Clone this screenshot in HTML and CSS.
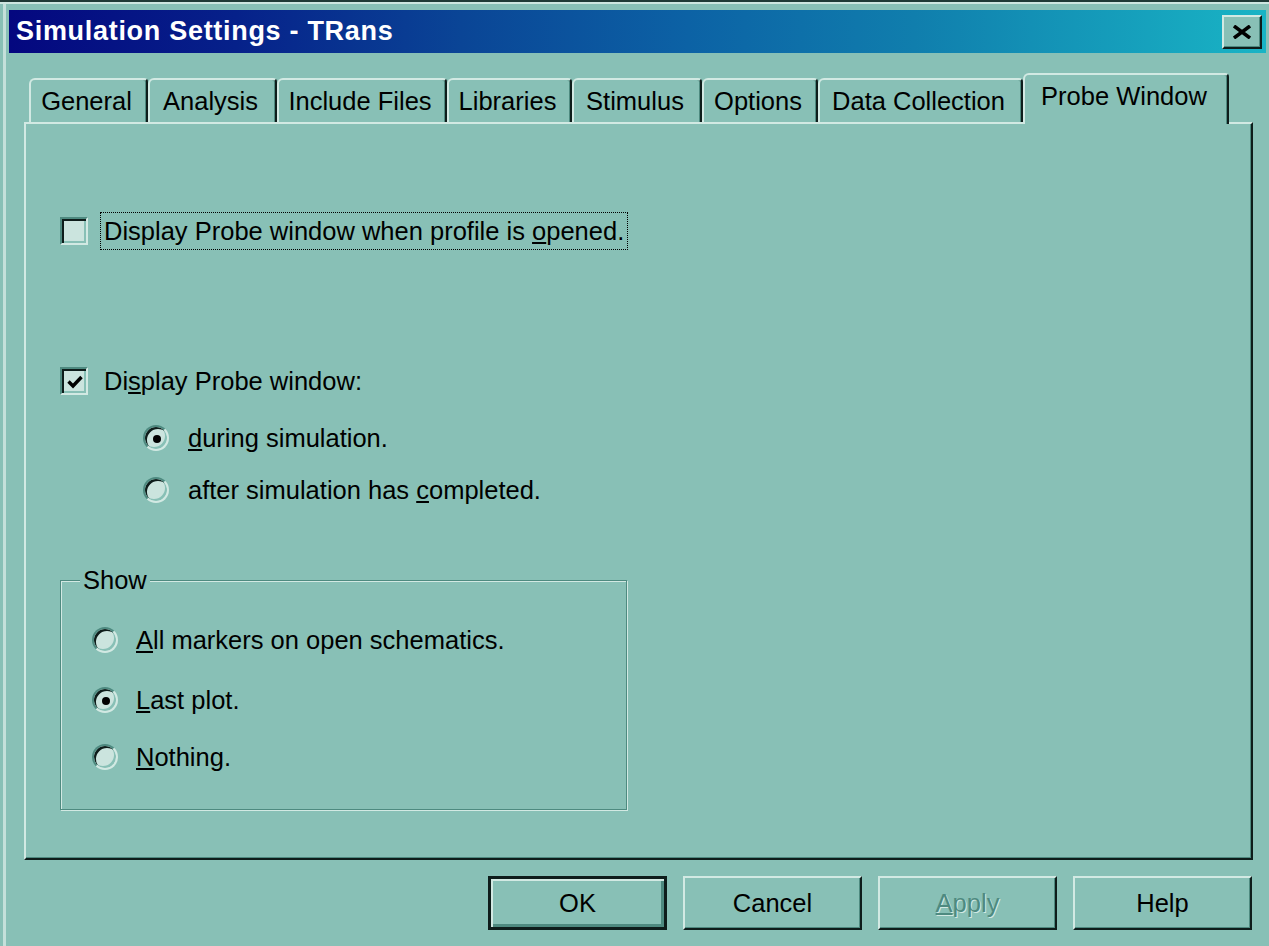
FILE: index.html
```html
<!DOCTYPE html>
<html lang="en">
<head>
<meta charset="utf-8">
<title>Simulation Settings - TRans</title>
<link rel="stylesheet" href="styles.css">
</head>
<body>
<div class="window">
  <div class="titlebar">
    <span class="title">Simulation Settings - TRans</span>
    <button class="close" type="button" aria-label="Close">
      <svg width="18" height="14" viewBox="0 0 18 14"><path d="M1 1 L17 13 M17 1 L1 13" stroke="#000" stroke-width="3.6" fill="none"/></svg>
    </button>
  </div>

  <div class="client">
    <div class="tabs">
      <div class="tab tab-general">General</div>
      <div class="tab tab-analysis">Analysis</div>
      <div class="tab tab-include">Include Files</div>
      <div class="tab tab-libraries">Libraries</div>
      <div class="tab tab-stimulus">Stimulus</div>
      <div class="tab tab-options">Options</div>
      <div class="tab tab-data">Data Collection</div>
      <div class="tab tab-probe active">Probe Window</div>
    </div>

    <div class="panel">
      <div class="option first">
        <span class="checkbox"></span>
        <span class="label focus">Display Probe window when profile is <u>o</u>pened.</span>
      </div>

      <div class="option second">
        <span class="checkbox checked">
          <svg width="16" height="14" viewBox="0 0 16 14"><path d="M1.5 6.5 L6 11 L14.5 2" stroke="#000" stroke-width="3.4" fill="none"/></svg>
        </span>
        <span class="label">Di<u>s</u>play Probe window:</span>
      </div>

      <div class="option sub sub-first">
        <span class="radio checked"></span>
        <span class="label"><u>d</u>uring simulation.</span>
      </div>
      <div class="option sub sub-second">
        <span class="radio"></span>
        <span class="label">after simulation has <u>c</u>ompleted.</span>
      </div>

      <div class="group">
        <span class="legend">Show</span>
        <div class="option grp grp-1">
          <span class="radio"></span>
          <span class="label"><u>A</u>ll markers on open schematics.</span>
        </div>
        <div class="option grp grp-2">
          <span class="radio checked"></span>
          <span class="label"><u>L</u>ast plot.</span>
        </div>
        <div class="option grp grp-3">
          <span class="radio"></span>
          <span class="label"><u>N</u>othing.</span>
        </div>
      </div>
    </div>

    <div class="buttons">
      <button class="btn default" type="button">OK</button>
      <button class="btn" type="button">Cancel</button>
      <button class="btn disabled" type="button"><u>A</u>pply</button>
      <button class="btn" type="button">Help</button>
    </div>
  </div>
</div>
</body>
</html>
```

FILE: styles.css
```css
* {
  box-sizing: border-box;
}

html, body {
  margin: 0;
  padding: 0;
  background: #88c0b6;
  overflow: hidden;
}

body {
  width: 1269px;
  height: 946px;
  font-family: "Liberation Sans", Arial, sans-serif;
  font-size: 25.5px;
  color: #000;
}

/* dialog frame */
.window {
  width: 1269px;
  height: 946px;
  border-top: 2px solid #1f3a36;
  padding: 8px 3px 0 9px;
  box-shadow: inset 0 2px 0 #cde6e0, inset 3px 0 0 #88c0b6, inset 6px 0 0 #c4e0da;
}

.titlebar {
  height: 43px;
  display: flex;
  align-items: center;
  justify-content: space-between;
  padding-left: 7px;
  background: linear-gradient(to right, #04077f 0%, #06218a 18%, #0a4596 36%, #0c62a5 54%, #107ead 72%, #19b4c5 100%);
}

.title {
  color: #fff;
  font-weight: bold;
  font-size: 27px;
  letter-spacing: 0.7px;
}

.close {
  width: 40px;
  height: 34px;
  margin-right: 4px;
  padding: 0;
  display: flex;
  align-items: center;
  justify-content: center;
  background: #88c0b6;
  border: 2px solid;
  border-color: #d2e9e3 #0e1d1b #0e1d1b #d2e9e3;
  box-shadow: inset -1px -1px 0 #4e8a80;
}

/* tab strip + page */
.client {
  padding: 20px 13px 0 15px;
}

.tabs {
  display: flex;
  align-items: flex-end;
  height: 51px;
  margin-left: 5px;
  margin-bottom: -2px;
  position: relative;
  z-index: 1;
}

.tab {
  height: 44px;
  margin-bottom: 2px;
  display: flex;
  align-items: center;
  justify-content: center;
  padding-right: 4px;
  background: #88c0b6;
  border-top: 2px solid #d2e9e3;
  border-left: 2px solid #d2e9e3;
  border-right: 2px solid #0e1d1b;
  border-radius: 6px 4px 0 0;
  box-shadow: inset -1px 0 0 #4e8a80;
  white-space: nowrap;
}

.tab-general { width: 119px; }
.tab-analysis { width: 129px; }
.tab-include { width: 170px; }
.tab-libraries { width: 125px; }
.tab-stimulus { width: 130px; }
.tab-options { width: 116px; }
.tab-data { width: 205px; }
.tab-probe { width: 206px; }

.tab.active {
  height: 51px;
  margin-bottom: 0;
  padding-bottom: 6px;
}

.panel {
  height: 738px;
  border: 2px solid;
  border-color: #d2e9e3 #0e1d1b #0e1d1b #d2e9e3;
  box-shadow: inset -1px -1px 0 #4e8a80;
  padding: 88px 0 0 34px;
}

/* check boxes and option buttons */
.option {
  display: flex;
  align-items: center;
  height: 38px;
}

.option.second { margin-top: 112px; }
.option.sub { margin-left: 83px; }
.option.sub-first { margin-top: 19px; }
.option.sub-second { margin-top: 14px; }

.label {
  line-height: 36px;
  padding: 0 3px;
  border: 1px solid transparent;
  white-space: nowrap;
}

.label.focus {
  border: 1px dotted #000;
}

.checkbox {
  width: 28px;
  height: 28px;
  margin-right: 12px;
  display: flex;
  align-items: center;
  justify-content: center;
  background: #cbe4de;
  border: 2px solid;
  border-color: #4e8a80 #d2e9e3 #d2e9e3 #4e8a80;
  box-shadow: inset 2px 2px 0 #0e1d1b, inset -2px -2px 0 #88c0b6;
}

.checkbox svg {
  margin: 2px 0 0 2px;
}

.radio {
  width: 26px;
  height: 26px;
  margin-right: 15px;
  border-radius: 50%;
  background: #cbe4de;
  border: 2px solid;
  border-color: #4e8a80 #d2e9e3 #d2e9e3 #4e8a80;
  box-shadow: inset 2px 2px 0 #0e1d1b, inset -2px -2px 0 #88c0b6;
  display: flex;
  align-items: center;
  justify-content: center;
}

.radio.checked::after {
  content: "";
  width: 8px;
  height: 8px;
  margin: 1px 0 0 1px;
  border-radius: 50%;
  background: #000;
}

/* Show group box */
.group {
  position: relative;
  width: 567px;
  height: 230px;
  margin-top: 71px;
  border: 1px solid #4e8a80;
  box-shadow: inset 1px 1px 0 #d2e9e3, 1px 1px 0 #d2e9e3;
  padding: 40px 0 0 31px;
}

.legend {
  position: absolute;
  top: -16px;
  left: 19px;
  padding: 0 3px;
  line-height: 30px;
  background: #88c0b6;
}

.option.grp .radio { margin-right: 14px; }
.option.grp-2 { margin-top: 22px; }
.option.grp-3 { margin-top: 19px; }

/* command buttons */
.buttons {
  display: flex;
  justify-content: flex-end;
  gap: 16px;
  margin-top: 16px;
  padding-right: 1px;
}

.btn {
  width: 179px;
  height: 54px;
  padding: 0;
  font-family: "Liberation Sans", Arial, sans-serif;
  font-size: 25.5px;
  color: #000;
  background: #88c0b6;
  border: 2px solid;
  border-color: #d2e9e3 #0e1d1b #0e1d1b #d2e9e3;
  box-shadow: inset -1px -1px 0 #4e8a80;
}

.btn.default {
  border: 3px solid #0e1d1b;
  box-shadow: inset 2px 2px 0 #d2e9e3, inset -3px -3px 0 #4e8a80;
}

.btn.disabled {
  color: #4e8a80;
  text-shadow: 1px 1px 0 #d2e9e3;
}

.btn u {
  text-decoration-thickness: 2px;
}
```
